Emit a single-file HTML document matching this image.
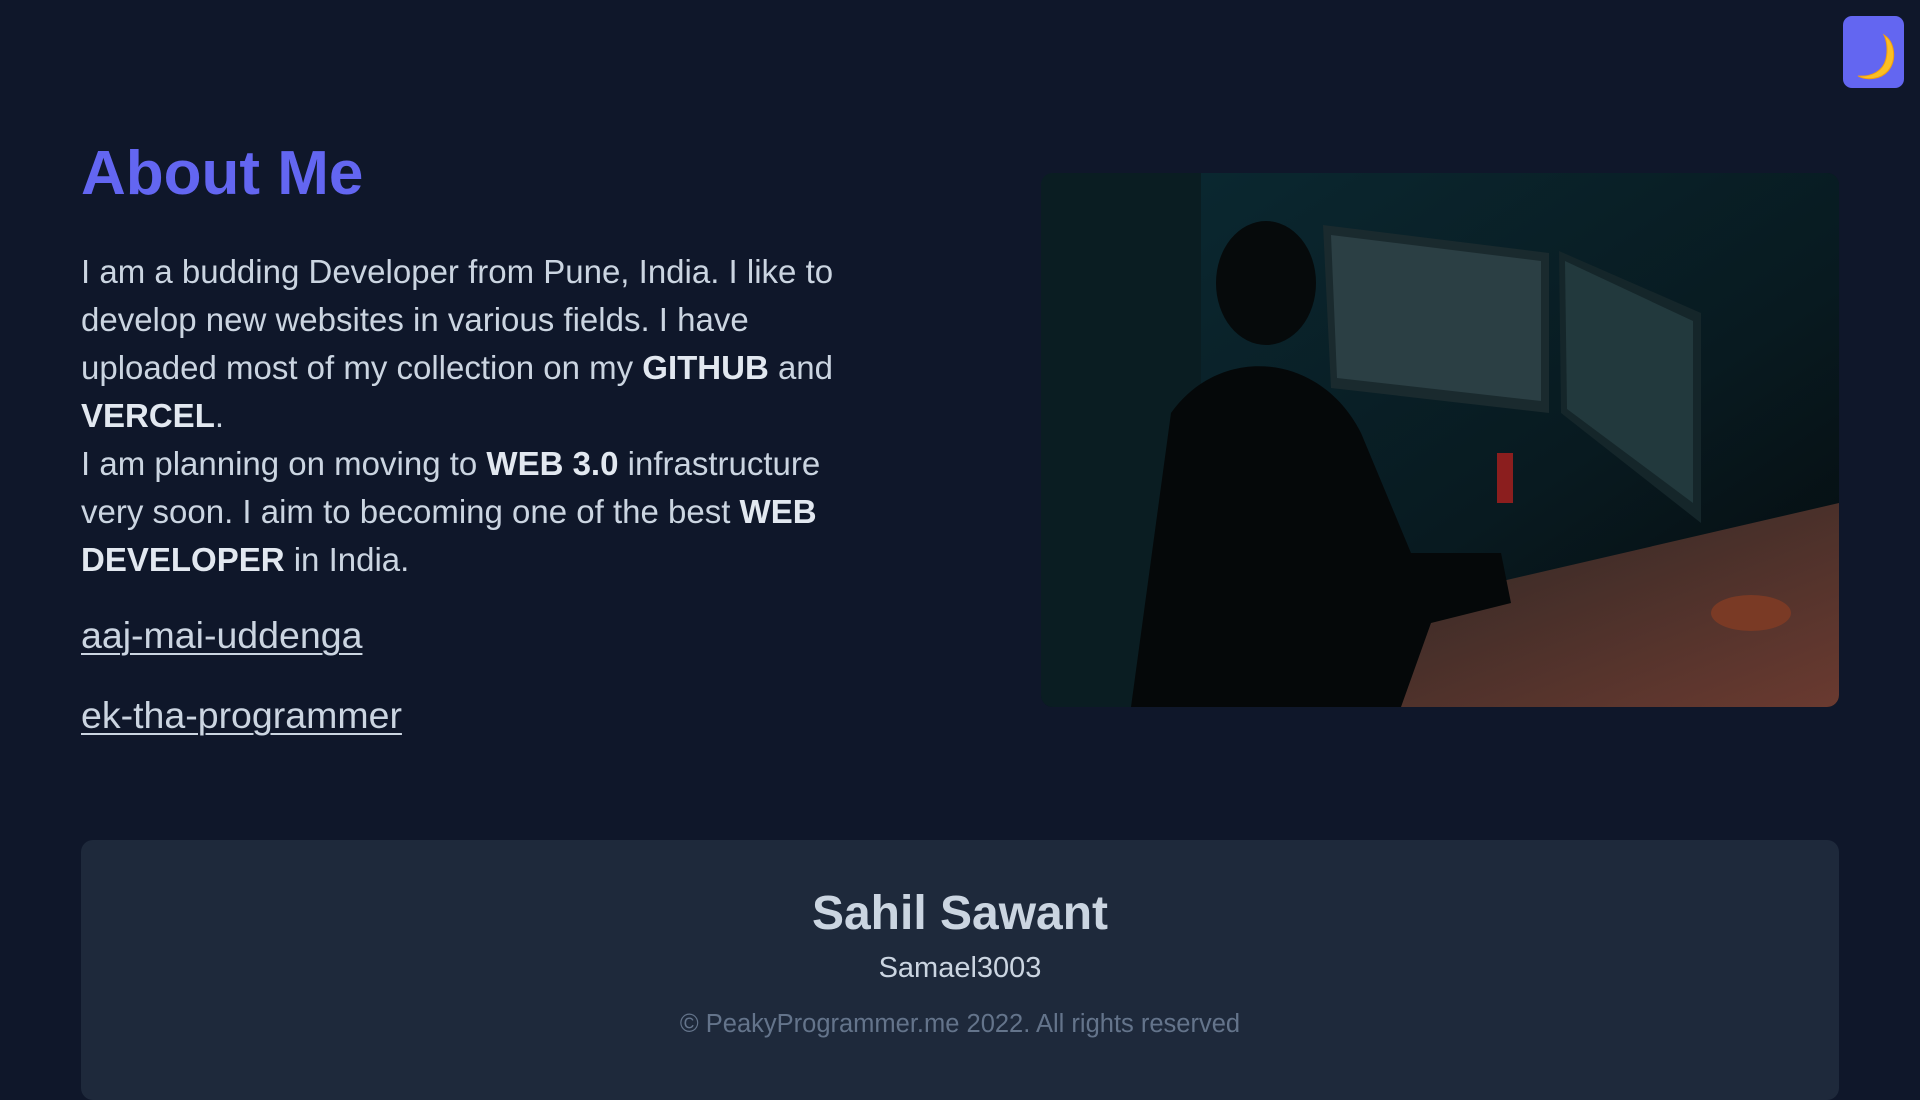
<!DOCTYPE html>
<html><head><meta charset="utf-8"><style>
html,body{margin:0;padding:0;width:1920px;height:1080px;overflow:hidden;background:#0f172a;font-family:"Liberation Sans",sans-serif;}
.btn{position:absolute;left:1843px;top:16px;width:61px;height:72px;background:#6366f1;border-radius:9px;}
h1{position:absolute;left:81px;top:138px;margin:0;font-size:62px;line-height:72px;color:#6366f1;font-weight:bold;}
.p{position:absolute;left:81px;top:248px;font-size:33px;line-height:48px;color:#cbd5e1;white-space:nowrap;}
.p b{color:#e2e8f0}
.l{position:absolute;left:81px;font-size:37.5px;color:#cbd5e1;text-decoration:underline;text-underline-offset:5px;text-decoration-thickness:2px;white-space:nowrap}
.img{position:absolute;left:1041px;top:173px;width:798px;height:534px;border-radius:12px;overflow:hidden;background:#061418;}
.foot{position:absolute;left:81px;top:840px;width:1758px;height:260px;background:#1e293b;border-radius:12px;text-align:center;}
.n{position:absolute;width:100%;top:46px;font-size:48px;font-weight:bold;color:#cbd5e1}
.s{position:absolute;width:100%;top:112px;font-size:29px;color:#cbd5e1}
.c{position:absolute;width:100%;top:170px;font-size:25.5px;color:#64748b}
</style></head><body>
<div class="btn"><svg width="61" height="72" viewBox="0 0 61 72"><path d="M41 19 C52 26 54 44 45 55 C38 63 24 65 15 60 C29 61 40 55 43 43 C45 34 44 25 41 19 Z" fill="#fbbf24" stroke="#f59e0b" stroke-width="1"/></svg></div>
<h1>About Me</h1>
<div class="p">I am a budding Developer from Pune, India. I like to<br>develop new websites in various fields. I have<br>uploaded most of my collection on my <b>GITHUB</b> and<br><b>VERCEL</b>.<br>I am planning on moving to <b>WEB 3.0</b> infrastructure<br>very soon. I aim to becoming one of the best <b>WEB</b><br><b>DEVELOPER</b> in India.</div>
<div class="l" style="top:614px">aaj-mai-uddenga</div>
<div class="l" style="top:694px">ek-tha-programmer</div>
<div class="img"><svg width="798" height="534" viewBox="0 0 798 534">
<defs><linearGradient id="bg" x1="0" y1="0" x2="1" y2="1"><stop offset="0" stop-color="#0b2a33"/><stop offset=".6" stop-color="#081a20"/><stop offset="1" stop-color="#05090b"/></linearGradient>
<linearGradient id="desk" x1="0" y1="0" x2="1" y2="1"><stop offset="0" stop-color="#2a2624"/><stop offset="1" stop-color="#6a3a30"/></linearGradient></defs>
<rect width="798" height="534" fill="url(#bg)"/>
<rect x="0" y="0" width="160" height="534" fill="#0a1d22"/>
<polygon points="280,450 798,330 798,534 330,534" fill="url(#desk)"/>
<polygon points="282,52 508,80 508,240 290,215" fill="#1a2a2e"/>
<polygon points="290,62 500,88 500,228 296,205" fill="#2b3f44"/>
<polygon points="518,78 660,140 660,350 520,240" fill="#15262a"/>
<polygon points="524,88 652,148 652,330 526,236" fill="#22393d"/>
<ellipse cx="225" cy="110" rx="50" ry="62" fill="#060a0b"/>
<path d="M130 240 C180 170 280 180 320 260 L370 380 L460 380 L470 430 L390 450 L360 534 L90 534 Z" fill="#050809"/>
<rect x="456" y="280" width="16" height="50" fill="#8b1e1e"/>
<ellipse cx="710" cy="440" rx="40" ry="18" fill="#7a3a25"/>
</svg></div>
<div class="foot"><div class="n">Sahil Sawant</div><div class="s">Samael3003</div><div class="c">© PeakyProgrammer.me 2022. All rights reserved</div></div>
</body></html>
